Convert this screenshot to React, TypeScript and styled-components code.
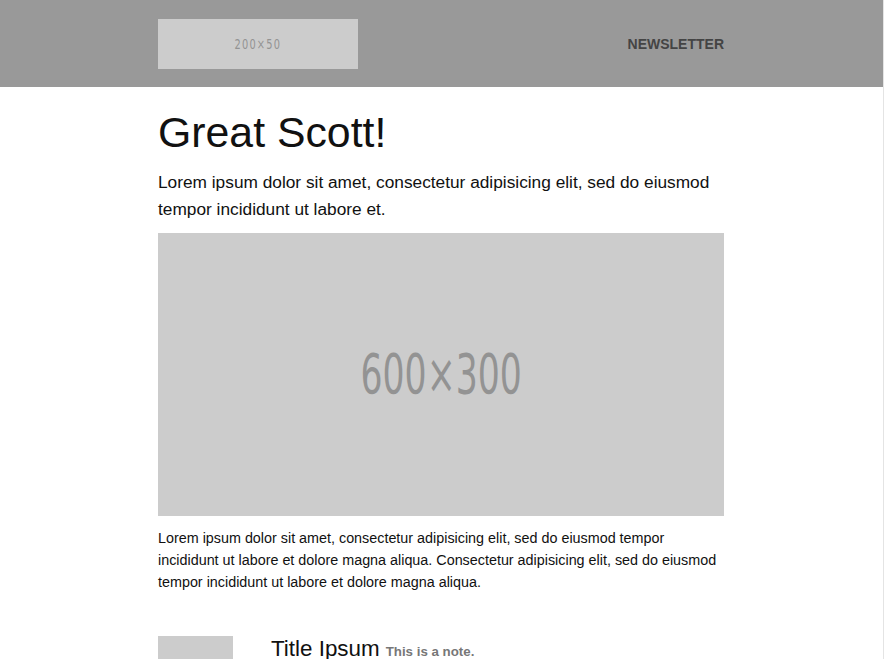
import React from "react";
import styled, { createGlobalStyle } from "styled-components";

const GlobalStyle = createGlobalStyle`
  html, body {
    margin: 0;
    padding: 0;
    background: #ffffff;
  }
  body {
    font-family: "Liberation Sans", Arial, Helvetica, sans-serif;
    color: #111111;
  }
`;

const Page = styled.div`
  width: 883px;
  min-height: 100vh;
  border-right: 1px solid #e4e4e4;
  background: #ffffff;
`;

const Header = styled.header`
  height: 87px;
  background: #999999;
  display: flex;
  padding-left: 158px;
`;

const HeaderInner = styled.div`
  width: 566px;
  display: flex;
  align-items: center;
  justify-content: space-between;
`;

const Placeholder = styled.div<{ $w: number; $h: number }>`
  width: ${(p) => p.$w}px;
  height: ${(p) => p.$h}px;
  background: #cccccc;
  display: flex;
  align-items: center;
  justify-content: center;
  overflow: hidden;
  flex-shrink: 0;
`;

const PlaceholderLabel = styled.span<{ $size: number; $spacing: number; $scale: number }>`
  font-family: "DejaVu Sans Condensed", "Liberation Sans", sans-serif;
  font-size: ${(p) => p.$size}px;
  letter-spacing: ${(p) => p.$spacing}px;
  color: #939393;
  display: inline-block;
  transform: scaleX(${(p) => p.$scale});
  line-height: 1;
`;

const NavLink = styled.a`
  font-family: "Liberation Sans", Arial, sans-serif;
  font-weight: bold;
  font-size: 14px;
  color: #444444;
  text-decoration: none;
  text-transform: uppercase;
`;

const Main = styled.main`
  width: 566px;
  margin-left: 158px;
  padding-top: 24px;
  display: flex;
  flex-direction: column;
`;

const Title = styled.h1`
  margin: 0;
  font-family: "Liberation Sans", Arial, sans-serif;
  font-weight: normal;
  font-size: 42.8px;
  line-height: 42px;
  color: #111111;
`;

const Lead = styled.p`
  margin: 16px 0 10px;
  font-size: 17.3px;
  line-height: 27px;
  color: #111111;
`;

const Body = styled.p`
  margin: 11px 0 0;
  font-size: 14.35px;
  line-height: 22px;
  color: #111111;
`;

const Item = styled.div`
  margin-top: 43px;
  display: flex;
  align-items: flex-start;
  gap: 38px;
`;

const ItemText = styled.div`
  padding-top: 0;
`;

const ItemTitle = styled.span`
  font-size: 22.4px;
  line-height: 26px;
  color: #111111;
`;

const Note = styled.span`
  margin-left: 6px;
  font-size: 13.3px;
  font-weight: bold;
  color: #777777;
`;

export default function App() {
  return (
    <>
      <GlobalStyle />
      <Page>
        <Header>
          <HeaderInner>
            <Placeholder $w={200} $h={50}>
              <PlaceholderLabel $size={14} $spacing={1.5} $scale={0.78}>200×50</PlaceholderLabel>
            </Placeholder>
            <NavLink href="#">Newsletter</NavLink>
          </HeaderInner>
        </Header>
        <Main>
          <Title>Great Scott!</Title>
          <Lead>
            Lorem ipsum dolor sit amet, consectetur adipisicing elit, sed do eiusmod tempor incididunt ut
            labore et.
          </Lead>
          <Placeholder $w={566} $h={283}>
            <PlaceholderLabel $size={55} $spacing={0} $scale={0.7}>600×300</PlaceholderLabel>
          </Placeholder>
          <Body>
            Lorem ipsum dolor sit amet, consectetur adipisicing elit, sed do eiusmod tempor incididunt ut
            labore et dolore magna aliqua. Consectetur adipisicing elit, sed do eiusmod tempor incididunt ut
            labore et dolore magna aliqua.
          </Body>
          <Item>
            <Placeholder $w={75} $h={75} />
            <ItemText>
              <ItemTitle>Title Ipsum</ItemTitle>
              <Note>This is a note.</Note>
            </ItemText>
          </Item>
        </Main>
      </Page>
    </>
  );
}
